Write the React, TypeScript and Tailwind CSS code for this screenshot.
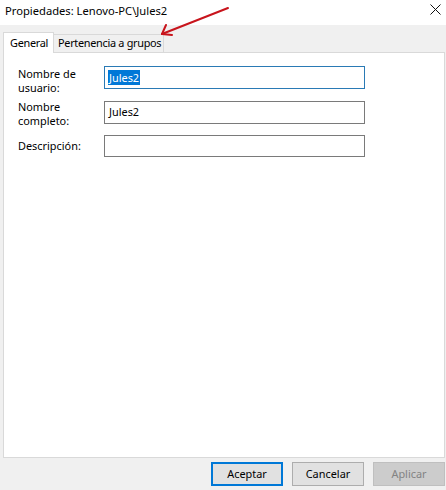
import React from "react";

const font = { fontFamily: '"Noto Sans", "Liberation Sans", sans-serif' };

export default function App() {
  return (
    <div
      className="w-[446px] h-[490px] bg-[#f0f0f0] flex flex-col text-[10.9px] text-black overflow-hidden relative whitespace-nowrap"
      style={font}
    >
      {/* title bar */}
      <div className="h-[25px] bg-white flex items-center justify-between pl-[5px] pr-[3px] shrink-0 text-[11.2px]">
        <span className="leading-none -mt-[3px]">Propiedades: Lenovo-PC\Jules2</span>
        <svg width="11" height="11" viewBox="0 0 11 11" className="-mt-[6px] mr-[2px]">
          <path d="M0.5 0.5 L10.5 10.5 M10.5 0.5 L0.5 10.5" stroke="#111" strokeWidth="1" />
        </svg>
      </div>

      {/* tabs */}
      <div className="flex items-end h-[27px] pl-[3px] shrink-0 tracking-[-0.3px]">
        <div className="relative z-10 -mb-px h-[21px] w-[51px] bg-white border-t border-l border-r border-[#d9d9d9] flex items-center pl-[6px]">
          General
        </div>
        <div className="h-[18px] w-[110px] bg-[#f0f0f0] border-t border-r border-[#d9d9d9] flex items-center pl-[4px]">
          Pertenencia a grupos
        </div>
      </div>

      {/* panel */}
      <div className="ml-[3px] mr-[1px] h-[406px] shrink-0 bg-white border border-[#d9d9d9] pt-[13px] pl-[14px]">
        <div className="flex h-[35px]">
          <div className="w-[86px] leading-[14px] pt-[1px]">
            Nombre de
            <br />
            usuario:
          </div>
          <div className="w-[261px] h-[23px] border border-[#2a7ab5] flex items-center pl-[3px]">
            <span className="bg-[#0078d7] text-white leading-[15px] px-px">Jules2</span>
          </div>
        </div>
        <div className="flex h-[34px]">
          <div className="w-[86px] leading-[14px] -mt-px">
            Nombre
            <br />
            completo:
          </div>
          <div className="w-[261px] h-[23px] border border-[#7a7a7a] flex items-center pl-[4px]">
            Jules2
          </div>
        </div>
        <div className="flex items-center h-[22px]">
          <div className="w-[86px] leading-[14px]">Descripción:</div>
          <div className="w-[261px] h-[22px] border border-[#7a7a7a]" />
        </div>
      </div>

      {/* buttons */}
      <div className="flex justify-end gap-[9px] pt-[4px] pr-[1px]">
        <button className="w-[72px] h-[24px] bg-[#e1e1e1] border-2 border-[#0078d7] leading-none">
          Aceptar
        </button>
        <button className="w-[72px] h-[24px] bg-[#e1e1e1] border border-[#adadad] leading-none">
          Cancelar
        </button>
        <button className="w-[72px] h-[24px] bg-[#cccccc] border border-[#bfbfbf] text-[#838383] leading-none">
          Aplicar
        </button>
      </div>

      {/* red annotation arrow */}
      <svg
        className="absolute left-0 top-0 pointer-events-none"
        width="446"
        height="60"
        viewBox="0 0 446 60"
      >
        <g stroke="#c8141c" strokeWidth="2" fill="none" strokeLinecap="round">
          <path d="M228 8 L162 34" />
          <path d="M162 34 L166 25" />
          <path d="M162 34 L172 35" />
        </g>
      </svg>
    </div>
  );
}
